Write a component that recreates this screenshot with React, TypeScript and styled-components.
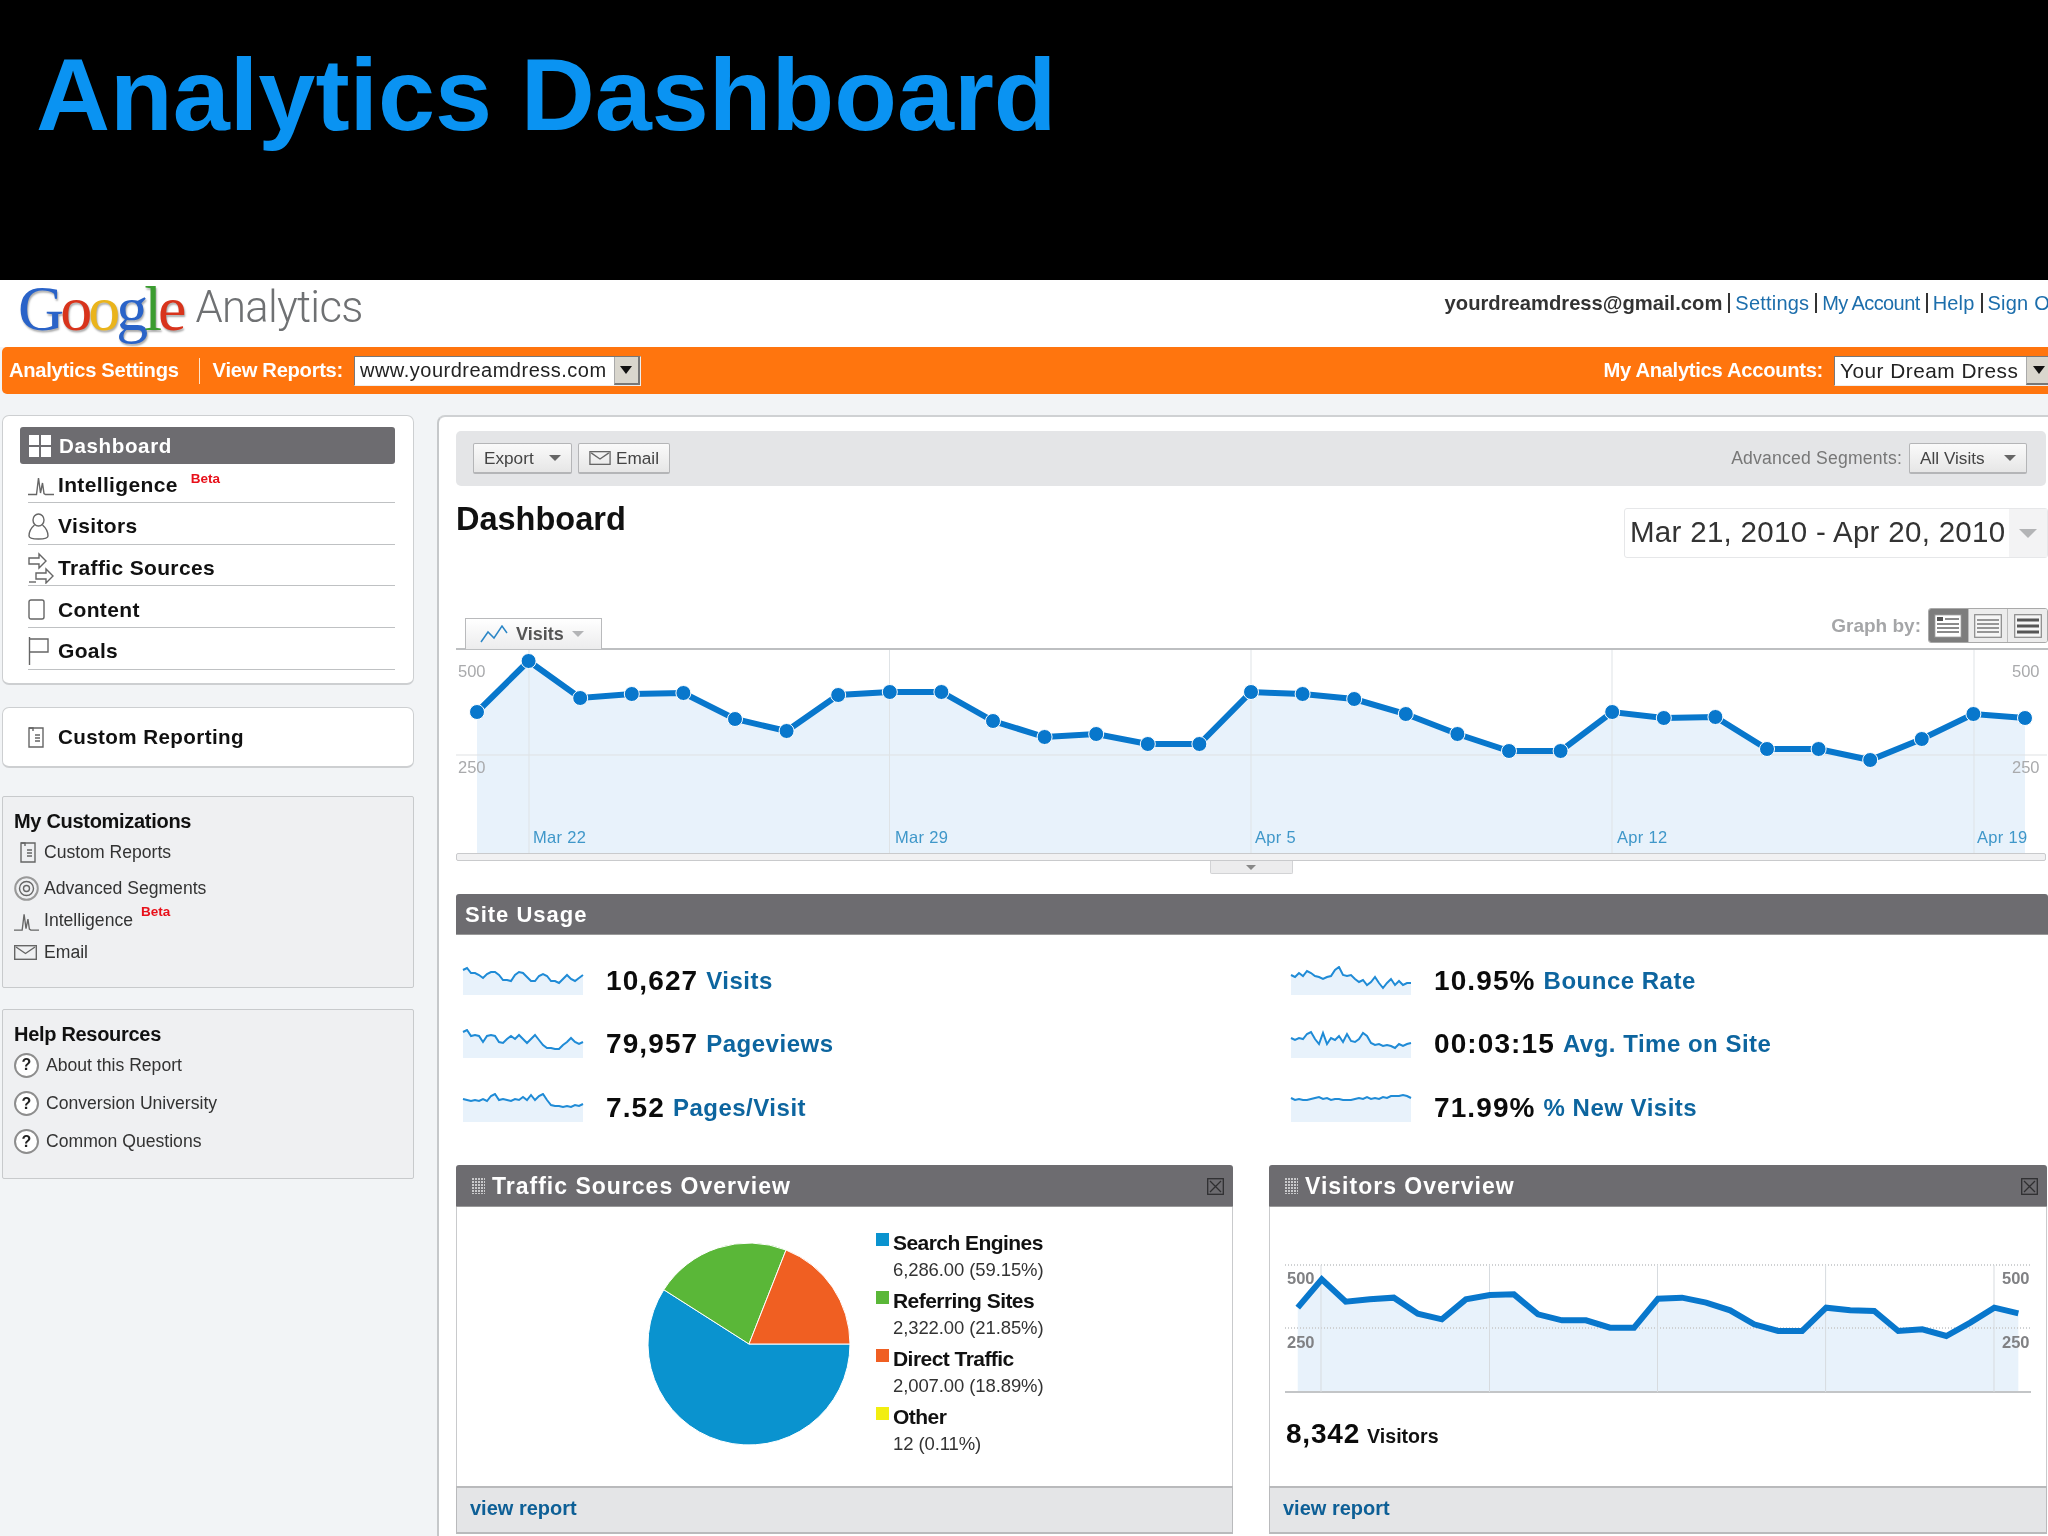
import React from "react";
import styled, { createGlobalStyle } from "styled-components";

const Global = createGlobalStyle`
  html, body { margin: 0; padding: 0; background: #000; }
  body { font-family: "Liberation Sans", Arial, sans-serif; }
  * { box-sizing: border-box; }
`;

const Page = styled.div`
  width: 2048px;
  height: 1536px;
  overflow: hidden;
  background: #f2f4f6;
  filter: blur(0.4px);
`;

const Slide = styled.header`
  height: 280px;
  background: #000;
  padding: 33px 0 0 36px;
`;

const SlideTitle = styled.h1`
  margin: 0;
  font-size: 102.6px;
  line-height: 124px;
  font-weight: 700;
  color: #0a93f2;
`;

const TopBar = styled.div`
  height: 67px;
  background: #fff;
  display: flex;
  justify-content: space-between;
  align-items: flex-start;
`;

const Logo = styled.div`
  display: flex;
  align-items: flex-start;
  margin: -6px 0 0 18px;
  white-space: nowrap;
`;

const GoogleWord = styled.span`
  font-family: "Liberation Serif", serif;
  font-size: 64px;
  line-height: 70px;
  letter-spacing: -4px;
  text-shadow: 1px 2px 2px #aaa;
`;

const GoogleLetter = styled.span<{ $c: string }>`
  color: ${(p) => p.$c};
`;

const AnalyticsWord = styled.span`
  margin: 8px 0 0 13px;
  font-family: "Roboto", sans-serif;
  font-weight: 300;
  font-size: 43.6px;
  line-height: 52px;
  letter-spacing: -0.7px;
  color: #6f7173;
`;

const UserLinks = styled.div`
  display: flex;
  align-items: center;
  margin: 11px -25px 0 0;
  font-size: 20px;
  line-height: 24px;
  white-space: nowrap;
`;

const UserMail = styled.span`
  font-weight: 700;
  font-size: 20.2px;
  color: #333;
  margin-right: 6px;
`;

const UserLink = styled.a<{ $tight?: boolean }>`
  color: #1c6eac;
  padding: 0 6px 0 5px;
  border-left: 2px solid #333;
  letter-spacing: ${(p) => (p.$tight ? -0.6 : 0.2)}px;
  line-height: 20px;
`;

const OrangeBar = styled.nav`
  height: 47px;
  margin-left: 2px;
  background: #ff750e;
  border-top-left-radius: 5px;
  border-bottom-left-radius: 5px;
  display: flex;
  align-items: center;
  color: #fff;
  font-weight: 700;
  font-size: 20.2px;
  white-space: nowrap;
`;

const BarText = styled.span<{ $lead?: number }>`
  margin-left: ${(p) => p.$lead ?? 0}px;
  letter-spacing: -0.3px;
`;

const BarDivider = styled.span`
  width: 1px;
  height: 26px;
  background: #ffe2c8;
  margin: 0 13px 0 20px;
`;

const BarSpacer = styled.div`
  flex: 1;
`;

const FakeSelect = styled.div<{ $w: number; $size: number; $out?: number }>`
  width: ${(p) => p.$w}px;
  height: 30px;
  margin: 0 ${(p) => -(p.$out ?? 0)}px 0 11px;
  flex: none;
  background: #fff;
  border: 1px solid #777;
  border-bottom-color: #eee;
  border-right-color: #eee;
  display: flex;
  align-items: center;
  justify-content: space-between;
  padding-left: 5px;
  color: #222;
  font-weight: 400;
  font-size: ${(p) => p.$size}px;
  letter-spacing: 0.5px;
  overflow: hidden;
`;

const SelectArrow = styled.span`
  width: 26px;
  height: 100%;
  flex: none;
  background: #d9d6cd;
  border-left: 1px solid #aaa;
  border-bottom: 2px solid #777;
  border-right: 2px solid #777;
  display: flex;
  align-items: center;
  justify-content: center;
  &::after {
    content: "";
    border-left: 6px solid transparent;
    border-right: 6px solid transparent;
    border-top: 8px solid #111;
  }
`;

const Body = styled.div`
  display: grid;
  grid-template-columns: 437px 1fr;
  height: 1143px;
  padding-top: 21px;
`;

const Side = styled.aside`
  padding: 0 0 0 2px;
  width: 414px;
`;

const NavPanel = styled.div`
  height: 270px;
  background: #fff;
  border: 1px solid #cdcfd1;
  border-bottom-width: 2px;
  border-radius: 7px;
  padding: 11px 18px 0 17px;
`;

const ActiveItem = styled.div`
  height: 37px;
  background: #6d6c70;
  border-radius: 3px;
  display: flex;
  align-items: center;
  padding-left: 9px;
  color: #fff;
  font-weight: 700;
  font-size: 20.6px;
  letter-spacing: 0.6px;
  svg {
    margin-right: 8px;
  }
`;

const NavItem = styled.div<{ $first?: boolean }>`
  height: ${(p) => (p.$first ? 39 : 41.7)}px;
  margin-left: 8px;
  padding-top: ${(p) => (p.$first ? 4 : 6)}px;
  border-bottom: 1px solid #bfc1c3;
  display: flex;
  align-items: center;
  color: #111;
  font-weight: 700;
  font-size: 21px;
  letter-spacing: 0.35px;
`;

const IconSlot = styled.span<{ $w: number; $pad?: number }>`
  width: ${(p) => p.$w}px;
  padding-left: ${(p) => p.$pad ?? 0}px;
  flex: none;
  display: flex;
  align-items: center;
`;

const Beta = styled.sup<{ $small?: boolean }>`
  color: #e8101a;
  font-size: 13.5px;
  font-weight: 700;
  letter-spacing: 0;
  line-height: 1;
  margin-left: ${(p) => (p.$small ? 8 : 13)}px;
  align-self: flex-start;
  margin-top: ${(p) => (p.$small ? 0 : 4)}px;
`;

const ReportPanel = styled(NavPanel)`
  height: 61px;
  margin-top: 22px;
  padding: 0 18px 0 25px;
  display: flex;
  align-items: center;
  color: #111;
  font-weight: 700;
  font-size: 20.6px;
  letter-spacing: 0.4px;
`;

const GreyPanel = styled.section<{ $h: number; $top: number }>`
  height: ${(p) => p.$h}px;
  margin-top: ${(p) => p.$top}px;
  background: #eff0f2;
  border: 1px solid #c8cacc;
  border-radius: 2px;
  padding: 12px 0 0 11px;
`;

const GreyTitle = styled.h3`
  margin: 0;
  font-size: 20px;
  line-height: 24px;
  letter-spacing: -0.3px;
  color: #111;
`;

const GreyItem = styled.div<{ $h: number }>`
  height: ${(p) => p.$h}px;
  display: flex;
  align-items: center;
  font-size: 17.6px;
  color: #333;
`;

const HelpIcon = styled.span`
  width: 25px;
  height: 25px;
  flex: none;
  border-radius: 50%;
  border: 2px solid #8d8d8d;
  background: #fff;
  display: flex;
  align-items: center;
  justify-content: center;
  margin-right: 7px;
  font-size: 16px;
  font-weight: 700;
  color: #222;
`;

const Main = styled.main`
  background: #fff;
  border-left: 2px solid #c6c8ca;
  border-top: 2px solid #cfd1d3;
  border-top-left-radius: 8px;
  padding: 14px 0 0 17px;
  overflow: hidden;
`;

const Toolbar = styled.div`
  height: 55px;
  margin-right: 2px;
  background: #e4e5e7;
  border-radius: 5px;
  display: flex;
  align-items: center;
  padding: 0 19px 0 17px;
`;

const ToolButton = styled.div<{ $w: number; $end?: boolean }>`
  width: ${(p) => p.$w}px;
  height: 31px;
  margin-right: ${(p) => (p.$end ? 0 : 6)}px;
  background: linear-gradient(#fafafa, #e6e6e6);
  border: 1px solid #b4b5b7;
  border-bottom-width: 2px;
  border-radius: 2px;
  display: flex;
  align-items: center;
  justify-content: space-between;
  padding: 0 10px 0 10px;
  font-size: 17.2px;
  color: #444;
`;

const SmallTriangle = styled.span<{ $c?: string; $s?: number }>`
  flex: none;
  border-left: ${(p) => p.$s ?? 6}px solid transparent;
  border-right: ${(p) => p.$s ?? 6}px solid transparent;
  border-top: ${(p) => p.$s ?? 6}px solid ${(p) => p.$c ?? "#666"};
`;

const SegmentLabel = styled.span`
  margin: 0 7px 0 auto;
  color: #777;
  font-size: 17.6px;
  letter-spacing: 0.2px;
`;

const TitleRow = styled.div`
  height: 102px;
  margin-top: 22px;
  display: flex;
  justify-content: space-between;
  align-items: flex-start;
`;

const PageTitle = styled.h2`
  margin: -9px 0 0 0;
  font-size: 32.5px;
  line-height: 40px;
  color: #111;
`;

const DateBox = styled.div`
  width: 424px;
  height: 50px;
  display: flex;
  align-items: stretch;
  border: 1px solid #e6e7e9;
  border-radius: 3px;
`;

const DateText = styled.div`
  flex: 1;
  padding: 0 0 2px 5px;
  display: flex;
  align-items: center;
  font-size: 29.5px;
  letter-spacing: 0.3px;
  color: #333;
  white-space: nowrap;
`;

const DateArrow = styled.div`
  width: 38px;
  background: #f3f3f4;
  display: flex;
  align-items: center;
  justify-content: center;
`;

const GraphHead = styled.div`
  height: 40px;
  border-bottom: 2px solid #bdbfc1;
  display: flex;
  justify-content: space-between;
  align-items: flex-end;
`;

const VisitsTab = styled.div`
  height: 31px;
  width: 137px;
  margin: 0 0 -1px 9px;
  background: linear-gradient(#fff, #ececed);
  border: 1px solid #b9babc;
  border-bottom: none;
  display: flex;
  align-items: center;
  gap: 8px;
  padding-left: 14px;
  font-weight: 700;
  font-size: 18px;
  color: #555;
`;

const GraphBy = styled.div`
  display: flex;
  align-items: center;
  height: 35px;
  margin-bottom: 5px;
  font-weight: 700;
  font-size: 19px;
  color: #a5a6a8;
`;

const GraphButtons = styled.div`
  display: flex;
  width: 120px;
  height: 35px;
  margin-left: 7px;
  border: 1px solid #a9a9a9;
  border-radius: 3px;
  overflow: hidden;
`;

const GraphButton = styled.div<{ $on?: boolean }>`
  flex: 1;
  display: flex;
  align-items: center;
  justify-content: center;
  background: ${(p) => (p.$on ? "#7d7d7d" : "#ececec")};
  & + & {
    border-left: 1px solid #bdbdbd;
  }
`;

const ChartSvg = styled.svg`
  display: block;
  width: 1591px;
  height: 203px;
`;

const ScrollBar = styled.div`
  height: 8px;
  margin-right: 2px;
  background: #f1f1f2;
  border: 1px solid #c9cacc;
  border-radius: 2px;
`;

const HandleRow = styled.div`
  display: flex;
  justify-content: center;
  margin-right: 2px;
`;

const Handle = styled.div`
  width: 83px;
  height: 13px;
  background: #ececed;
  border: 1px solid #d2d3d5;
  border-top: none;
  border-radius: 0 0 2px 2px;
  display: flex;
  align-items: center;
  justify-content: center;
`;

const SectionBar = styled.div`
  height: 41px;
  margin-top: 20px;
  background: #6d6c70;
  border-radius: 3px 3px 0 0;
  border-bottom: 1px solid #999;
  display: flex;
  align-items: center;
  padding: 2px 0 0 9px;
  color: #fff;
  font-weight: 700;
  font-size: 22px;
  letter-spacing: 1px;
`;

const MetricGrid = styled.div`
  display: grid;
  grid-template-columns: 828px 1fr;
  grid-auto-flow: column;
  grid-template-rows: repeat(3, 63.5px);
  padding: 14px 0 0 6px;
`;

const Metric = styled.div`
  display: flex;
  align-items: center;
  white-space: nowrap;
`;

const Spark = styled.svg`
  width: 122px;
  height: 30px;
  flex: none;
  margin-right: 22px;
`;

const MetricValue = styled.b`
  font-size: 28px;
  letter-spacing: 1.1px;
  color: #0b0b0b;
  margin-right: 8px;
`;

const MetricLabel = styled.a`
  font-weight: 700;
  font-size: 24px;
  letter-spacing: 0.5px;
  color: #0d659f;
`;

const PanelRow = styled.div`
  display: grid;
  grid-template-columns: 777px 778px;
  gap: 36px;
  margin-top: 25.5px;
`;

const Panel = styled.section`
  height: 369px;
  display: flex;
  flex-direction: column;
`;

const PanelHead = styled.div`
  height: 42px;
  flex: none;
  background: #6d6c70;
  border-radius: 3px 3px 0 0;
  border-bottom: 1px solid #999;
  display: flex;
  align-items: center;
  padding: 1px 9px 0 16px;
  color: #fff;
  font-weight: 700;
  font-size: 23px;
  letter-spacing: 1px;
  svg:first-child {
    margin-right: 7px;
  }
  svg:last-child {
    margin-left: auto;
  }
`;

const PanelBody = styled.div`
  flex: 1;
  background: #fff;
  border-left: 1px solid #c9cacc;
  border-right: 1px solid #c9cacc;
`;

const PanelFoot = styled.div`
  height: 48px;
  flex: none;
  background: #e4e5e7;
  border: 1px solid #b9babc;
  border-width: 2px 1px 2px 1px;
  display: flex;
  align-items: center;
  padding: 0 0 4px 13px;
`;

const ViewLink = styled.a`
  font-weight: 700;
  font-size: 20px;
  color: #0d5f96;
`;

const PieLayout = styled.div`
  height: 100%;
  display: flex;
  align-items: flex-start;
  padding: 23px 0 0 189px;
`;

const PieSvg = styled.svg`
  width: 206px;
  height: 206px;
  flex: none;
  margin: 11px 24px 0 0;
`;

const Legend = styled.div`
  display: grid;
  grid-auto-rows: 58px;
`;

const LegendItem = styled.div`
  display: grid;
  grid-template-columns: 17px 1fr;
  align-items: start;
`;

const Swatch = styled.span<{ $c: string }>`
  width: 13px;
  height: 13px;
  margin-top: 3px;
  background: ${(p) => p.$c};
`;

const LegendName = styled.div`
  font-size: 21px;
  line-height: 25px;
  font-weight: 700;
  letter-spacing: -0.55px;
  color: #111;
`;

const LegendValue = styled.div`
  margin-top: -4px;
  font-size: 18.5px;
  line-height: 20px;
  letter-spacing: -0.1px;
  color: #333;
`;

const VisitorsBody = styled(PanelBody)`
  padding: 57px 0 0 15px;
`;

const VisitorsSvg = styled.svg`
  display: block;
  width: 746px;
  height: 130px;
`;

const VisitorsTotal = styled.div`
  margin: 24px 0 0 1px;
  display: flex;
  align-items: baseline;
`;

const TotalValue = styled.b`
  font-size: 28px;
  letter-spacing: 0.8px;
  color: #0b0b0b;
  margin-right: 7px;
`;

const TotalLabel = styled.b`
  font-size: 19.6px;
  color: #111;
`;

// icons

const Stroke = { fill: "none", stroke: "#666", strokeWidth: 1.4 };

const GridIcon = () => (
  <svg width="22" height="22" viewBox="0 0 22 22" fill="#fff">
    <rect x="0" y="0" width="10" height="10" />
    <rect x="12" y="0" width="10" height="10" />
    <rect x="0" y="12" width="10" height="10" />
    <rect x="12" y="12" width="10" height="10" />
  </svg>
);

const SpikeIcon = ({ w = 26 }: { w?: number }) => (
  <svg width={w} height="22" viewBox="0 0 26 22" {...Stroke}>
    <path d="M0 20.5H8.5L10.5 4L12.5 19L14.5 9L16 19.5L17.5 20.5H26" />
  </svg>
);

const PersonIcon = () => (
  <svg width="21" height="27" viewBox="0 0 21 27" {...Stroke}>
    <ellipse cx="10.5" cy="7" rx="5.5" ry="6" />
    <path d="M6.5 12C3 15 1 19 1 23C1 25 3 26 10.5 26C18 26 20 25 20 23C20 19 18 15 14.5 12" />
  </svg>
);

const ArrowsIcon = () => (
  <svg width="27" height="32" viewBox="0 0 27 32" {...Stroke}>
    <path d="M1 6H11V2L18 9L11 16V12H1Z" />
    <path d="M8 21H18V17L25 24L18 31V27H8Z" />
    <path d="M1 30H8" />
  </svg>
);

const PageIcon = () => (
  <svg width="17" height="21" viewBox="0 0 17 21" {...Stroke}>
    <rect x="1" y="1" width="15" height="19" rx="2" />
  </svg>
);

const FlagIcon = () => (
  <svg width="22" height="28" viewBox="0 0 22 28" {...Stroke}>
    <path d="M1.5 0V28" />
    <path d="M1.5 2H20V15H1.5" />
  </svg>
);

const ReportIcon = () => (
  <svg width="16" height="21" viewBox="0 0 16 21" {...Stroke}>
    <path d="M1 1H15V20H1Z" />
    <path d="M1 1H5V4" />
    <path d="M7 8H12M7 11H12M7 14H12" />
  </svg>
);

const TargetIcon = () => (
  <svg width="25" height="25" viewBox="0 0 25 25" {...Stroke}>
    <circle cx="12.5" cy="12.5" r="11.3" strokeWidth="2" stroke="#999" />
    <circle cx="12.5" cy="12.5" r="7" />
    <circle cx="12.5" cy="12.5" r="3" />
  </svg>
);

const MailIcon = ({ w = 23, h = 15 }: { w?: number; h?: number }) => (
  <svg width={w} height={h} viewBox="0 0 23 15" {...Stroke}>
    <rect x="0.7" y="0.7" width="21.6" height="13.6" />
    <path d="M2 2L11.5 8.5L21 2" />
  </svg>
);

const TrendIcon = () => (
  <svg width="28" height="18" viewBox="0 0 28 18" fill="none" stroke="#2b86c6" strokeWidth="1.5">
    <path d="M1 17L8 7L14 13L22 1L27 8" />
  </svg>
);

const DetailIcon = ({ kind }: { kind: number }) => (
  <svg width="28" height="24" viewBox="0 0 28 24">
    <rect x="0.7" y="0.7" width="26.6" height="22.6" fill={kind === 0 ? "#fff" : "#f6f6f6"} stroke="#888" strokeWidth="1.2" />
    {kind === 0 && (
      <>
        <rect x="3" y="3" width="6" height="4" fill="#555" />
        <path d="M11 5H25M3 10H25M3 14H25M3 18H25" stroke="#666" strokeWidth="1.4" />
      </>
    )}
    {kind === 1 && <path d="M3 6H25M3 10H25M3 14H25M3 18H25" stroke="#777" strokeWidth="1.4" />}
    {kind === 2 && <path d="M3 6H25M3 12H25M3 18H25" stroke="#555" strokeWidth="3" />}
  </svg>
);

const GripIcon = () => (
  <svg width="13" height="16" viewBox="0 0 13 16">
    <defs>
      <pattern id="grip" width="3" height="3" patternUnits="userSpaceOnUse">
        <rect width="2" height="2" fill="#c9c9cb" />
      </pattern>
    </defs>
    <rect width="13" height="16" fill="url(#grip)" />
  </svg>
);

const CloseIcon = () => (
  <svg width="17" height="17" viewBox="0 0 17 17" fill="none" stroke="#2f2f31" strokeWidth="1.3">
    <rect x="0.7" y="0.7" width="15.6" height="15.6" />
    <path d="M3 3L14 14M14 3L3 14" />
  </svg>
);

// data

const visitsY = [
  711, 660, 697, 693, 692, 718, 730, 694, 691, 691, 720, 736, 733, 743, 743, 691, 693, 698, 713, 733, 750, 750, 711,
  717, 716, 748, 748, 759, 738, 713, 717,
];

const chartX = (i: number) => 21 + i * 51.6;
const chartY = (y: number) => y - 649;

const MainChart = () => {
  const pts = visitsY.map((y, i) => `${chartX(i)},${chartY(y)}`).join(" ");
  const axisText = { fontSize: 16.5, fontFamily: "Liberation Sans", fill: "#a9aaac" };
  const dateText = { fontSize: 16.5, fontFamily: "Liberation Sans", fill: "#3f97c9", letterSpacing: 0.3 };
  return (
    <ChartSvg viewBox="0 0 1591 203">
      <polygon points={`21,203 ${pts} ${chartX(30)},203`} fill="#e8f2fb" />
      <path d="M0 105H1591" stroke="#dfe1e3" strokeWidth="1" />
      {[73, 433.5, 795, 1156, 1518].map((x) => (
        <path key={x} d={`M${x} 0V203`} stroke="#dfe3e6" strokeWidth="1" />
      ))}
      <polyline points={pts} fill="none" stroke="#0877cc" strokeWidth="6" />
      {visitsY.map((y, i) => (
        <circle key={i} cx={chartX(i)} cy={chartY(y)} r="7.5" fill="#0877cc" stroke="#fff" strokeWidth="1" />
      ))}
      <text x="2" y="27" {...axisText}>500</text>
      <text x="2" y="123" {...axisText}>250</text>
      <text x="1556" y="27" {...axisText}>500</text>
      <text x="1556" y="123" {...axisText}>250</text>
      <text x="77" y="193" {...dateText}>Mar 22</text>
      <text x="439" y="193" {...dateText}>Mar 29</text>
      <text x="799" y="193" {...dateText}>Apr 5</text>
      <text x="1161" y="193" {...dateText}>Apr 12</text>
      <text x="1521" y="193" {...dateText}>Apr 19</text>
    </ChartSvg>
  );
};

const SparkLine = ({ v }: { v: number[] }) => {
  const step = 120 / (v.length - 1);
  const pts = v.map((y, i) => `${1 + i * step},${y + 1}`).join(" ");
  return (
    <Spark viewBox="0 0 122 30">
      <polygon points={`1,29 ${pts} 121,29`} fill="#e8f2fb" />
      <polyline points={pts} fill="none" stroke="#1f8bd6" strokeWidth="2" />
    </Spark>
  );
};

const sparks = {
  visits: [3, 1, 6, 6, 8, 11, 7, 5, 5, 8, 13, 13, 14, 8, 5, 6, 10, 14, 14, 9, 7, 9, 14, 14, 16, 12, 8, 12, 14, 11, 8],
  pages: [2, 0, 6, 5, 6, 12, 6, 5, 6, 12, 13, 9, 6, 9, 5, 9, 13, 9, 5, 10, 15, 18, 18, 19, 19, 15, 12, 8, 12, 14, 12],
  perVisit: [5, 6, 7, 6, 7, 5, 7, 2, 0, 6, 5, 6, 7, 5, 6, 3, 6, 1, 6, 2, 0, 6, 11, 12, 12, 13, 12, 13, 11, 12, 10],
  bounce: [8, 10, 6, 9, 4, 6, 9, 10, 12, 10, 9, 3, 0, 8, 9, 8, 12, 15, 13, 18, 15, 10, 16, 21, 16, 12, 18, 14, 18, 16, 16],
  time: [8, 10, 8, 9, 4, 2, 9, 14, 3, 14, 8, 10, 6, 12, 4, 11, 12, 9, 3, 6, 13, 15, 14, 16, 15, 16, 18, 14, 16, 14, 13],
  newVisits: [4, 6, 5, 6, 6, 5, 4, 3, 5, 4, 6, 5, 5, 6, 6, 6, 5, 4, 5, 3, 5, 4, 5, 3, 4, 2, 2, 2, 1, 2, 4],
};

const metrics = [
  { s: sparks.visits, v: "10,627", l: "Visits" },
  { s: sparks.pages, v: "79,957", l: "Pageviews" },
  { s: sparks.perVisit, v: "7.52", l: "Pages/Visit" },
  { s: sparks.bounce, v: "10.95%", l: "Bounce Rate" },
  { s: sparks.time, v: "00:03:15", l: "Avg. Time on Site" },
  { s: sparks.newVisits, v: "71.99%", l: "% New Visits" },
];

const polar = (deg: number, r = 101) => {
  const a = (deg * Math.PI) / 180;
  return `${103 + r * Math.cos(a)} ${103 + r * Math.sin(a)}`;
};

const wedge = (from: number, to: number) =>
  `M103 103L${polar(from)}A101 101 0 ${to - from > 180 ? 1 : 0} 1 ${polar(to)}Z`;

const legend = [
  { c: "#0a93cf", n: "Search Engines", v: "6,286.00 (59.15%)" },
  { c: "#5ab738", n: "Referring Sites", v: "2,322.00 (21.85%)" },
  { c: "#f05f22", n: "Direct Traffic", v: "2,007.00 (18.89%)" },
  { c: "#f2ee10", n: "Other", v: "12 (0.11%)" },
];

const visitorsY = [
  470, 385, 452, 445, 440, 488, 505, 445, 432, 430, 490, 508, 508, 530, 530, 443, 440, 455, 478, 520, 540, 540, 470,
  478, 480, 540, 535, 555, 515, 470, 487,
];

const VisitorsChart = () => {
  // chart origin in the page is x 1285, y 1264
  const x = (i: number) => 1240 + (112 + 46.6 * i) / 1.94 - 1285;
  const y = (v: number) => v / 3 + 1150 - 1264 + 1;
  const pts = visitorsY.map((v, i) => `${x(i)},${y(v)}`).join(" ");
  const axisText = { fontSize: 16.5, fontFamily: "Liberation Sans", fill: "#808184", fontWeight: 700 };
  return (
    <VisitorsSvg viewBox="0 0 746 130">
      <polygon points={`${x(0)},128 ${pts} ${x(30)},128`} fill="#e8f2fb" />
      <path d="M0 1H746M0 64H746" stroke="#cfd1d3" strokeWidth="2" strokeDasharray="1 2" />
      <path d="M0 128H746" stroke="#c3c5c7" strokeWidth="2" />
      {[36, 204.5, 372.5, 540.6, 709].map((vx) => (
        <path key={vx} d={`M${vx} 1V128`} stroke="#d7dbdf" strokeWidth="1" />
      ))}
      <polyline points={pts} fill="none" stroke="#0877cc" strokeWidth="6" />
      <text x="2" y="20" {...axisText}>500</text>
      <text x="2" y="84" {...axisText}>250</text>
      <text x="717" y="20" {...axisText}>500</text>
      <text x="717" y="84" {...axisText}>250</text>
    </VisitorsSvg>
  );
};

export default function App() {
  return (
    <Page>
      <Global />
      <Slide>
        <SlideTitle>Analytics Dashboard</SlideTitle>
      </Slide>
      <TopBar>
        <Logo>
          <GoogleWord>
            <GoogleLetter $c="#2a63c8">G</GoogleLetter>
            <GoogleLetter $c="#d8341c">o</GoogleLetter>
            <GoogleLetter $c="#eab41c">o</GoogleLetter>
            <GoogleLetter $c="#2a63c8">g</GoogleLetter>
            <GoogleLetter $c="#3b9c30">l</GoogleLetter>
            <GoogleLetter $c="#d8341c">e</GoogleLetter>
          </GoogleWord>
          <AnalyticsWord>Analytics</AnalyticsWord>
        </Logo>
        <UserLinks>
          <UserMail>yourdreamdress@gmail.com</UserMail>
          <UserLink>Settings</UserLink>
          <UserLink $tight>My Account</UserLink>
          <UserLink>Help</UserLink>
          <UserLink>Sign Out</UserLink>
        </UserLinks>
      </TopBar>
      <OrangeBar>
        <BarText $lead={7}>Analytics Settings</BarText>
        <BarDivider />
        <BarText>View Reports:</BarText>
        <FakeSelect $w={287} $size={20}>
          www.yourdreamdress.com
          <SelectArrow />
        </FakeSelect>
        <BarSpacer />
        <BarText>My Analytics Accounts:</BarText>
        <FakeSelect $w={219} $size={20.8} $out={5}>
          Your Dream Dress
          <SelectArrow />
        </FakeSelect>
      </OrangeBar>
      <Body>
        <Side>
          <NavPanel>
            <ActiveItem>
              <GridIcon />
              Dashboard
            </ActiveItem>
            <NavItem $first>
              <IconSlot $w={30}><SpikeIcon /></IconSlot>
              Intelligence
              <Beta>Beta</Beta>
            </NavItem>
            <NavItem>
              <IconSlot $w={30}><PersonIcon /></IconSlot>
              Visitors
            </NavItem>
            <NavItem>
              <IconSlot $w={30}><ArrowsIcon /></IconSlot>
              Traffic Sources
            </NavItem>
            <NavItem>
              <IconSlot $w={30}><PageIcon /></IconSlot>
              Content
            </NavItem>
            <NavItem>
              <IconSlot $w={30}><FlagIcon /></IconSlot>
              Goals
            </NavItem>
          </NavPanel>
          <ReportPanel>
            <IconSlot $w={30}><ReportIcon /></IconSlot>
            Custom Reporting
          </ReportPanel>
          <GreyPanel $h={192} $top={28}>
            <GreyTitle>My Customizations</GreyTitle>
            <GreyItem $h={39}>
              <IconSlot $w={30} $pad={6}><ReportIcon /></IconSlot>
              Custom Reports
            </GreyItem>
            <GreyItem $h={33}>
              <IconSlot $w={30}><TargetIcon /></IconSlot>
              Advanced Segments
            </GreyItem>
            <GreyItem $h={31}>
              <IconSlot $w={30}><SpikeIcon w={25} /></IconSlot>
              Intelligence
              <Beta $small>Beta</Beta>
            </GreyItem>
            <GreyItem $h={33}>
              <IconSlot $w={30}><MailIcon /></IconSlot>
              Email
            </GreyItem>
          </GreyPanel>
          <GreyPanel $h={170} $top={21}>
            <GreyTitle>Help Resources</GreyTitle>
            <GreyItem $h={38}>
              <HelpIcon>?</HelpIcon>
              About this Report
            </GreyItem>
            <GreyItem $h={39}>
              <HelpIcon>?</HelpIcon>
              Conversion University
            </GreyItem>
            <GreyItem $h={37}>
              <HelpIcon>?</HelpIcon>
              Common Questions
            </GreyItem>
          </GreyPanel>
        </Side>
        <Main>
          <Toolbar>
            <ToolButton $w={99}>
              Export
              <SmallTriangle />
            </ToolButton>
            <ToolButton $w={92}>
              <MailIcon w={22} h={14} />
              Email
            </ToolButton>
            <SegmentLabel>Advanced Segments:</SegmentLabel>
            <ToolButton $w={118} $end>
              All Visits
              <SmallTriangle />
            </ToolButton>
          </Toolbar>
          <TitleRow>
            <PageTitle>Dashboard</PageTitle>
            <DateBox>
              <DateText>Mar 21, 2010 - Apr 20, 2010</DateText>
              <DateArrow>
                <SmallTriangle $c="#b3b4b6" $s={9} />
              </DateArrow>
            </DateBox>
          </TitleRow>
          <GraphHead>
            <VisitsTab>
              <TrendIcon />
              Visits
              <SmallTriangle $c="#b3b4b6" />
            </VisitsTab>
            <GraphBy>
              Graph by:
              <GraphButtons>
                <GraphButton $on><DetailIcon kind={0} /></GraphButton>
                <GraphButton><DetailIcon kind={1} /></GraphButton>
                <GraphButton><DetailIcon kind={2} /></GraphButton>
              </GraphButtons>
            </GraphBy>
          </GraphHead>
          <MainChart />
          <ScrollBar />
          <HandleRow>
            <Handle>
              <SmallTriangle $c="#888" $s={5} />
            </Handle>
          </HandleRow>
          <SectionBar>Site Usage</SectionBar>
          <MetricGrid>
            {metrics.map((m) => (
              <Metric key={m.l}>
                <SparkLine v={m.s} />
                <MetricValue>{m.v}</MetricValue>
                <MetricLabel>{m.l}</MetricLabel>
              </Metric>
            ))}
          </MetricGrid>
          <PanelRow>
            <Panel>
              <PanelHead>
                <GripIcon />
                Traffic Sources Overview
                <CloseIcon />
              </PanelHead>
              <PanelBody>
                <PieLayout>
                  <PieSvg viewBox="0 0 206 206">
                    <path d={wedge(0, 212.5)} fill="#0a93cf" stroke="#fff" strokeWidth="1" />
                    <path d={wedge(-147.5, -68.5)} fill="#5ab738" stroke="#fff" strokeWidth="1" />
                    <path d={wedge(-68.5, 0)} fill="#f05f22" stroke="#fff" strokeWidth="1" />
                  </PieSvg>
                  <Legend>
                    {legend.map((l) => (
                      <LegendItem key={l.n}>
                        <Swatch $c={l.c} />
                        <LegendName>{l.n}</LegendName>
                        <span />
                        <LegendValue>{l.v}</LegendValue>
                      </LegendItem>
                    ))}
                  </Legend>
                </PieLayout>
              </PanelBody>
              <PanelFoot>
                <ViewLink>view report</ViewLink>
              </PanelFoot>
            </Panel>
            <Panel>
              <PanelHead>
                <GripIcon />
                Visitors Overview
                <CloseIcon />
              </PanelHead>
              <VisitorsBody>
                <VisitorsChart />
                <VisitorsTotal>
                  <TotalValue>8,342</TotalValue>
                  <TotalLabel>Visitors</TotalLabel>
                </VisitorsTotal>
              </VisitorsBody>
              <PanelFoot>
                <ViewLink>view report</ViewLink>
              </PanelFoot>
            </Panel>
          </PanelRow>
        </Main>
      </Body>
    </Page>
  );
}
